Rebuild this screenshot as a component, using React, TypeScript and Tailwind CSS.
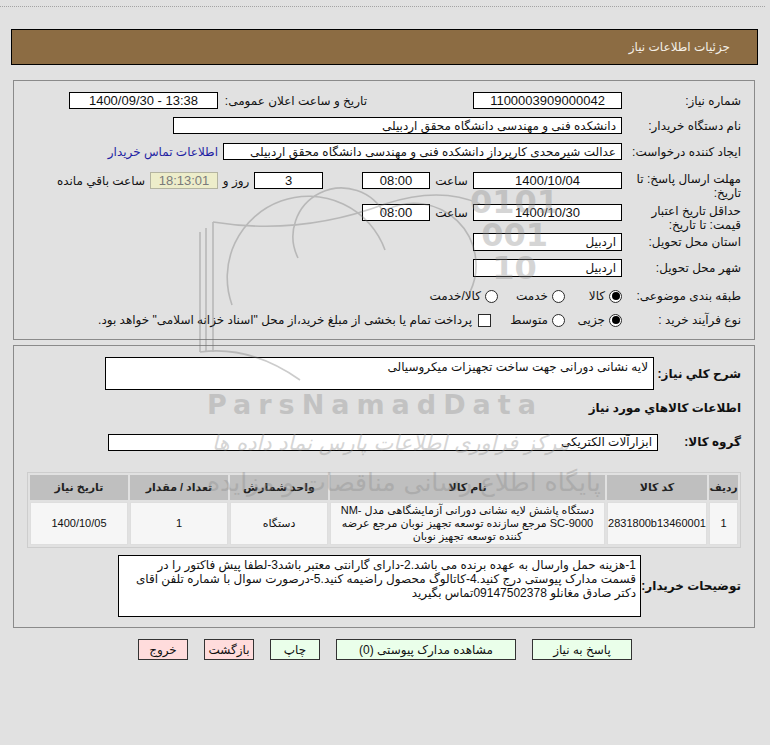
import React from "react";

const box = "h-[17px] bg-white border border-black flex items-center px-[5px] whitespace-nowrap overflow-hidden";

function Radio({ checked }: { checked?: boolean }) {
  return (
    <span className="w-[13px] h-[13px] rounded-full border border-[#2a2a2a] bg-white flex items-center justify-center shrink-0">
      {checked && <span className="w-[8px] h-[8px] rounded-full bg-black" />}
    </span>
  );
}

function Label({ children, w }: { children: React.ReactNode; w: string }) {
  return <div className={`${w} shrink-0 leading-[14px]`}>{children}</div>;
}

export default function App() {
  return (
    <div
      dir="rtl"
      className="relative w-[770px] h-[745px] overflow-hidden bg-[#e1e1e1] text-[12px] text-[#111] font-['Liberation_Sans','DejaVu_Sans',sans-serif]"
    >
      <div className="h-[7px] w-[765px] mr-[5px] border-b border-dotted border-[#a4a4a4]" />

      {/* header */}
      <div className="mt-[22px] mr-[12px] ml-[11px] h-[36px] border border-black bg-[#8c6c43] flex items-center pr-[27px] text-[#f4efe6]">
        جزئیات اطلاعات نیاز
      </div>

      {/* section 1 */}
      <div className="mt-[15px] mr-[15px] ml-[13px] h-[260px] border border-[#8a8a8a] pr-[13px]">
        <div className="mt-[11px] h-[17px] flex items-center">
          <Label w="w-[119px]">شماره نیاز:</Label>
          <div className={`${box} w-[149px] justify-center text-[13px]`}>1100003909000042</div>
          <div className="w-[255px] pr-[106px] whitespace-nowrap">تاریخ و ساعت اعلان عمومی:</div>
          <div dir="ltr" className={`${box} w-[149px] justify-center text-[13px]`}>1400/09/30 - 13:38</div>
        </div>

        <div className="mt-[8px] h-[17px] flex items-center">
          <Label w="w-[119px]">نام دستگاه خریدار:</Label>
          <div className={`${box} w-[449px]`}>دانشکده فنی و مهندسی دانشگاه محقق اردبیلی</div>
        </div>

        <div className="mt-[9px] h-[17px] flex items-center">
          <Label w="w-[119px]">ایجاد کننده درخواست:</Label>
          <div className={`${box} w-[399px]`}>عدالت شیرمحدی کارپرداز دانشکده فنی و مهندسی دانشگاه محقق اردبیلی</div>
          <a className="mr-[5px] text-[#1f1fa3] whitespace-nowrap">اطلاعات تماس خریدار</a>
        </div>

        <div className="mt-[12px] h-[26px] flex items-start">
          <Label w="w-[119px]">مهلت ارسال پاسخ: تا تاریخ:</Label>
          <div className={`${box} w-[149px] justify-center text-[13px]`}>1400/10/04</div>
          <div className="w-[43px] h-[17px] flex items-center justify-center">ساعت</div>
          <div className={`${box} w-[68px] justify-center text-[13px]`}>08:00</div>
          <div className={`${box} w-[69px] mr-[39px] justify-center text-[13px]`}>3</div>
          <div className="w-[36px] h-[17px] flex items-center justify-center">روز و</div>
          <div className="w-[68px] h-[17px] flex items-center justify-center bg-[#ededca] border border-[#b4b4a0] text-[#7a7a7a] text-[13px]">
            18:13:01
          </div>
          <div className="mr-[5px] h-[17px] flex items-center whitespace-nowrap">ساعت باقي مانده</div>
        </div>

        <div className="mt-[6px] h-[26px] flex items-start">
          <Label w="w-[119px]">حداقل تاریخ اعتبار قیمت: تا تاریخ:</Label>
          <div className={`${box} w-[149px] justify-center text-[13px]`}>1400/10/30</div>
          <div className="w-[43px] h-[17px] flex items-center justify-center">ساعت</div>
          <div className={`${box} w-[68px] justify-center text-[13px]`}>08:00</div>
        </div>

        <div className="mt-[3px] h-[18px] flex items-center">
          <Label w="w-[119px]">استان محل تحویل:</Label>
          <div className={`${box} w-[149px] h-[18px]`}>اردبیل</div>
        </div>

        <div className="mt-[8px] h-[18px] flex items-center">
          <Label w="w-[119px]">شهر محل تحویل:</Label>
          <div className={`${box} w-[149px] h-[18px]`}>اردبیل</div>
        </div>

        <div className="mt-[10px] h-[18px] flex items-center">
          <Label w="w-[119px]">طبقه بندی موضوعی:</Label>
          <div className="w-[57px] flex items-center gap-[4px]">
            <Radio checked />
            <span>کالا</span>
          </div>
          <div className="w-[67px] flex items-center gap-[4px]">
            <Radio />
            <span>خدمت</span>
          </div>
          <div className="flex items-center gap-[4px]">
            <Radio />
            <span>کالا/خدمت</span>
          </div>
        </div>

        <div className="mt-[6px] h-[18px] flex items-center">
          <Label w="w-[119px]">نوع فرآیند خرید :</Label>
          <div className="w-[57px] flex items-center gap-[4px]">
            <Radio checked />
            <span>جزیی</span>
          </div>
          <div className="w-[74px] flex items-center gap-[4px]">
            <Radio />
            <span>متوسط</span>
          </div>
          <div className="flex items-center gap-[6px] whitespace-nowrap">
            <span className="w-[13px] h-[13px] border border-[#2a2a2a] bg-white shrink-0" />
            <span>پرداخت تمام یا بخشی از مبلغ خرید،از محل "اسناد خزانه اسلامی" خواهد بود.</span>
          </div>
        </div>
      </div>

      {/* section 2 */}
      <div className="mt-[5px] mr-[15px] ml-[13px] h-[283px] border border-[#8a8a8a] pr-[13px]">
        <div className="mt-[11px] flex items-center">
          <div className="w-[87px] shrink-0 font-bold whitespace-nowrap">شرح کلي نياز:</div>
          <div className="w-[549px] h-[33px] bg-white border border-black px-[5px] pt-[1px] leading-[16px]">
            لایه نشانی دورانی جهت ساخت تجهیزات میکروسیالی
          </div>
        </div>

        <div className="mt-[9px] h-[18px] flex items-center font-bold">اطلاعات كالاهاي مورد نياز</div>

        <div className="mt-[16px] flex items-center">
          <div className="w-[83px] shrink-0 font-bold whitespace-nowrap">گروه كالا:</div>
          <div className={`${box} w-[550px]`}>ابزارآلات الکتریکی</div>
        </div>

        <table className="mt-[21px] w-[714px] table-fixed border border-[#cdcdcd] border-separate border-spacing-[2px] text-center text-[11px]">
          <thead>
            <tr className="h-[25px] text-[#222]">
              <th className="w-[29px] bg-[#bfbfbf] font-bold text-[10.5px] whitespace-nowrap">ردیف</th>
              <th className="w-[100px] bg-[#bfbfbf] font-bold">کد کالا</th>
              <th className="bg-[#bfbfbf] font-bold">نام کالا</th>
              <th className="w-[98px] bg-[#bfbfbf] font-bold">واحد شمارش</th>
              <th className="w-[98px] bg-[#bfbfbf] font-bold">تعداد / مقدار</th>
              <th className="w-[98px] bg-[#bfbfbf] font-bold">تاریخ نیاز</th>
            </tr>
          </thead>
          <tbody>
            <tr className="h-[43px] bg-[#f6f6f6]">
              <td className="border border-[#dedede]">1</td>
              <td className="border border-[#dedede]">2831800b13460001</td>
              <td className="border border-[#dedede] leading-[13px] px-[1px]">
                دستگاه پاشش لایه نشانی دورانی آزمایشگاهی مدل NM-SC-9000 مرجع سازنده توسعه تجهیز نوبان مرجع عرضه کننده توسعه تجهیز نوبان
              </td>
              <td className="border border-[#dedede]">دستگاه</td>
              <td className="border border-[#dedede]">1</td>
              <td className="border border-[#dedede]">1400/10/05</td>
            </tr>
          </tbody>
        </table>

        <div className="mt-[7px] flex items-center">
          <div className="w-[100px] shrink-0 font-bold whitespace-nowrap">توضیحات خریدار:</div>
          <div className="w-[523px] h-[62px] bg-white border border-black px-[4px] pt-[2px] leading-[14px]">
            1-هزینه حمل وارسال به عهده برنده می باشد.2-دارای گارانتی معتبر باشد3-لطفا پیش فاکتور را در قسمت مدارک پیوستی درج کنید.4-کاتالوگ محصول راضیمه کنید.5-درصورت سوال با شماره تلفن اقای دکتر صادق مغانلو 09147502378تماس بگیرید
          </div>
        </div>
      </div>

      {/* buttons */}
      <div className="mt-[11px] flex justify-center gap-[16px]">
        <button className="w-[100px] h-[21px] bg-[#eaffea] border border-[#333]">پاسخ به نياز</button>
        <button className="w-[180px] h-[21px] bg-[#eaffea] border border-[#333]">مشاهده مدارک پیوستی (0)</button>
        <button className="w-[50px] h-[21px] bg-[#eaffea] border border-[#333]">چاپ</button>
        <button className="w-[50px] h-[21px] bg-[#ffdcdc] border border-[#333]">بازگشت</button>
        <button className="w-[50px] h-[21px] bg-[#ffdcdc] border border-[#333]">خروج</button>
      </div>

      {/* watermark */}
      <div className="pointer-events-none absolute inset-0 text-[#8a8a8a] opacity-35">
        <svg className="absolute inset-0" width="770" height="745" fill="none" stroke="#6e6e6e" strokeWidth="1.6">
          <path d="M200 352 V232 M206 352 V228 M213 352 V222" />
          <path d="M213 222 Q300 236 385 204 Q440 186 480 204" />
          <path d="M232 305 A75 75 0 0 1 385 250" />
          <path d="M298 258 A48 48 0 0 1 385 215" />
          <path d="M386 210 A62 62 0 0 1 470 292" />
          <path d="M200 352 Q250 345 300 380" />
        </svg>
        <div dir="ltr" className="absolute left-[470px] top-[186px] font-['DejaVu_Sans',sans-serif] font-bold text-[32px] leading-[33px] text-center">
          <div>0101</div>
          <div>001</div>
          <div>10</div>
        </div>
        <div dir="ltr" className="absolute left-[207px] top-[385px] font-['DejaVu_Sans',sans-serif] font-bold text-[27px] tracking-[7px]">
          ParsNamadData
        </div>
        <div className="absolute left-[212px] top-[428px] text-[21px] italic font-['DejaVu_Sans',sans-serif]">مرکز فراوری اطلاعات پارس نماد داده ها</div>
        <div className="absolute left-[207px] top-[464px] text-[25px] font-['DejaVu_Sans',sans-serif]">پایگاه اطلاع رسانی مناقصات و مزایده</div>
      </div>
    </div>
  );
}
